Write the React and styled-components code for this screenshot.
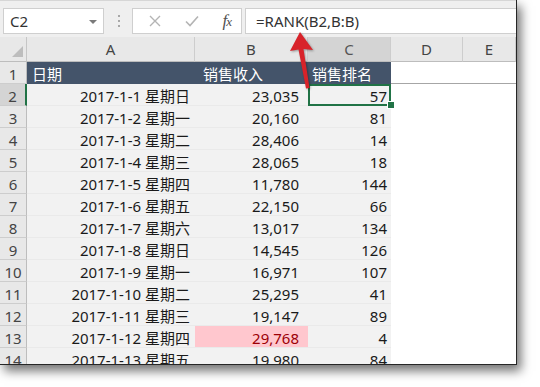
import React from "react";
import styled, { createGlobalStyle } from "styled-components";

const Global = createGlobalStyle`
  html, body { margin: 0; padding: 0; background: #ffffff; }
  body { width: 540px; height: 387px; overflow: hidden; }
`;

const FONT = `"Noto Sans", "Noto Sans CJK SC", sans-serif`;

const Stage = styled.div`
  width: 540px;
  height: 387px;
  background: #fff;
`;

const Window = styled.div`
  position: relative;
  width: 516px;
  height: 364px;
  overflow: hidden;
  background: #fff;
  border-right: 1px solid #262626;
  border-bottom: 1px solid #262626;
  box-shadow: 4px 6px 10px rgba(0, 0, 0, 0.55);
  font-family: ${FONT};
`;

const FormulaBar = styled.div`
  display: flex;
  align-items: center;
  height: 37px;
  box-sizing: border-box;
  padding: 6px 0 3px 3px;
  background: #efefef;
  border-top: 1px solid #d6d6d6;
`;

const NameBox = styled.div`
  position: relative;
  display: flex;
  align-items: center;
  width: 101px;
  height: 26px;
  box-sizing: border-box;
  padding-left: 6px;
  background: #fff;
  border: 1px solid #cfcfcf;
  font-size: 15px;
  color: #333;
`;

const Caret = styled.span`
  position: absolute;
  right: 6px;
  top: 11px;
  width: 0;
  height: 0;
  border-left: 4px solid transparent;
  border-right: 4px solid transparent;
  border-top: 4px solid #7a7a7a;
`;

const Grip = styled.div`
  display: flex;
  flex-direction: column;
  gap: 3px;
  margin: 0 12px 0 14px;
`;

const GripDot = styled.span`
  width: 2px;
  height: 2px;
  background: #a8a8a8;
`;

const FxGroup = styled.div`
  display: flex;
  align-items: center;
  justify-content: space-between;
  width: 110px;
  height: 26px;
  box-sizing: border-box;
  padding: 0 10px 0 16px;
  background: #fff;
  border: 1px solid #cfcfcf;
`;

const FxLabel = styled.span`
  font-family: "Liberation Serif", "DejaVu Serif", serif;
  font-style: italic;
  font-size: 17px;
  color: #505050;
  letter-spacing: -1px;
  small { font-size: 13px; }
`;

const FormulaInput = styled.div`
  flex: 1;
  display: flex;
  align-items: center;
  height: 26px;
  box-sizing: border-box;
  margin-left: 3px;
  padding-left: 10px;
  background: #fff;
  border: 1px solid #cfcfcf;
  border-right: none;
  font-size: 15px;
  color: #333;
`;

const Sheet = styled.div`
  display: grid;
  grid-template-columns: 27px 168px 113px 83px 72px 53px;
  grid-template-rows: 25px;
  grid-auto-rows: 22px;
`;

const Corner = styled.div`
  position: relative;
  background: #e8e8e8;
  border-right: 1px solid #c6c6c6;
  border-bottom: 1px solid #bdbdbd;
  box-sizing: border-box;
  &::after {
    content: "";
    position: absolute;
    right: 3px;
    bottom: 4px;
    width: 0;
    height: 0;
    border-left: 11px solid transparent;
    border-bottom: 11px solid #bdbdbd;
  }
`;

const ColHead = styled.div`
  display: flex;
  align-items: center;
  justify-content: center;
  box-sizing: border-box;
  background: ${(p) => (p.$active ? "#d4d4d4" : "#e8e8e8")};
  border-right: 1px solid #cdcdcd;
  border-bottom: 1px solid #bdbdbd;
  font-size: 15px;
  color: ${(p) => (p.$active ? "#555" : "#444")};
`;

const RowHead = styled.div`
  display: flex;
  align-items: center;
  justify-content: center;
  box-sizing: border-box;
  background: ${(p) => (p.$active ? "#d4d4d4" : "#e8e8e8")};
  border-right: ${(p) => (p.$active ? "2px solid #217346" : "1px solid #bdbdbd")};
  border-bottom: 1px solid #cdcdcd;
  font-size: 15px;
  color: #444;
  padding-top: 3px;
`;

const Cell = styled.div`
  position: relative;
  display: flex;
  align-items: center;
  justify-content: ${(p) => (p.$align === "left" ? "flex-start" : "flex-end")};
  box-sizing: border-box;
  padding: 2px ${(p) => p.$pr ?? 5}px 0 ${(p) => p.$pl ?? 5}px;
  white-space: nowrap;
  font-size: 15px;
  background: ${(p) =>
    p.$kind === "head"
      ? "#44546a"
      : p.$kind === "bad"
      ? "#ffc7ce"
      : p.$kind === "blank"
      ? "#ffffff"
      : "#f2f2f2"};
  color: ${(p) =>
    p.$kind === "head" ? "#ffffff" : p.$kind === "bad" ? "#9c0006" : "#1a1a1a"};
  border-bottom: 1px solid
    ${(p) =>
      p.$kind === "head" ? "#44546a" : p.$kind === "blank" ? "#ffffff" : "#eaeaea"};
  ${(p) => p.$line && "border-bottom: 1px solid #a6a6a6;"}
  ${(p) =>
    p.$selected &&
    `
    outline: 2px solid #217346;
    outline-offset: -2px;
    z-index: 2;
  `}
`;

const FillHandle = styled.span`
  position: absolute;
  right: -4px;
  bottom: -4px;
  width: 6px;
  height: 6px;
  background: #217346;
  border: 1px solid #fff;
`;

const ArrowLayer = styled.svg`
  position: absolute;
  left: 288px;
  top: 30px;
  pointer-events: none;
  z-index: 5;
  filter: drop-shadow(1px 1px 1px rgba(0, 0, 0, 0.35));
`;

const rows = [
  ["2017-1-1 星期日", "23,035", "57"],
  ["2017-1-2 星期一", "20,160", "81"],
  ["2017-1-3 星期二", "28,406", "14"],
  ["2017-1-4 星期三", "28,065", "18"],
  ["2017-1-5 星期四", "11,780", "144"],
  ["2017-1-6 星期五", "22,150", "66"],
  ["2017-1-7 星期六", "13,017", "134"],
  ["2017-1-8 星期日", "14,545", "126"],
  ["2017-1-9 星期一", "16,971", "107"],
  ["2017-1-10 星期二", "25,295", "41"],
  ["2017-1-11 星期三", "19,147", "89"],
  ["2017-1-12 星期四", "29,768", "4"],
  ["2017-1-13 星期五", "19,980", "84"],
];

export default function App() {
  return (
    <Stage>
      <Global />
      <Window>
        <FormulaBar>
          <NameBox>
            C2
            <Caret />
          </NameBox>
          <Grip>
            <GripDot />
            <GripDot />
            <GripDot />
          </Grip>
          <FxGroup>
            <svg width="12" height="12" viewBox="0 0 12 12">
              <path d="M1 1 L11 11 M11 1 L1 11" stroke="#b4b4b4" strokeWidth="1.4" fill="none" />
            </svg>
            <svg width="14" height="12" viewBox="0 0 14 12">
              <path d="M1 6.5 L5 10.5 L13 1.5" stroke="#b4b4b4" strokeWidth="1.6" fill="none" />
            </svg>
            <FxLabel>
              f<small>x</small>
            </FxLabel>
          </FxGroup>
          <FormulaInput>=RANK(B2,B:B)</FormulaInput>
        </FormulaBar>

        <Sheet>
          <Corner />
          <ColHead>A</ColHead>
          <ColHead>B</ColHead>
          <ColHead $active>C</ColHead>
          <ColHead>D</ColHead>
          <ColHead>E</ColHead>

          <RowHead>1</RowHead>
          <Cell $kind="head" $align="left">日期</Cell>
          <Cell $kind="head" $align="left" $pl={8}>销售收入</Cell>
          <Cell $kind="head" $align="left" $pl={4}>销售排名</Cell>
          <Cell $kind="blank" $line />
          <Cell $kind="blank" $line />

          {rows.map((r, i) => {
            const n = i + 2;
            return (
              <React.Fragment key={n}>
                <RowHead $active={n === 2}>{n}</RowHead>
                <Cell>{r[0]}</Cell>
                <Cell $kind={n === 13 ? "bad" : undefined} $pr={9}>
                  {r[1]}
                </Cell>
                <Cell $selected={n === 2} $pr={4}>
                  {r[2]}
                  {n === 2 && <FillHandle />}
                </Cell>
                <Cell $kind="blank" />
                <Cell $kind="blank" />
              </React.Fragment>
            );
          })}
        </Sheet>

        <ArrowLayer width="30" height="62" viewBox="0 0 30 62">
          <path
            d="M12 2 L25 20 L15.5 19 L21.5 58 L18 58.5 L10.5 19.5 L2 21 Z"
            fill="#d8232a"
          />
        </ArrowLayer>
      </Window>
    </Stage>
  );
}
